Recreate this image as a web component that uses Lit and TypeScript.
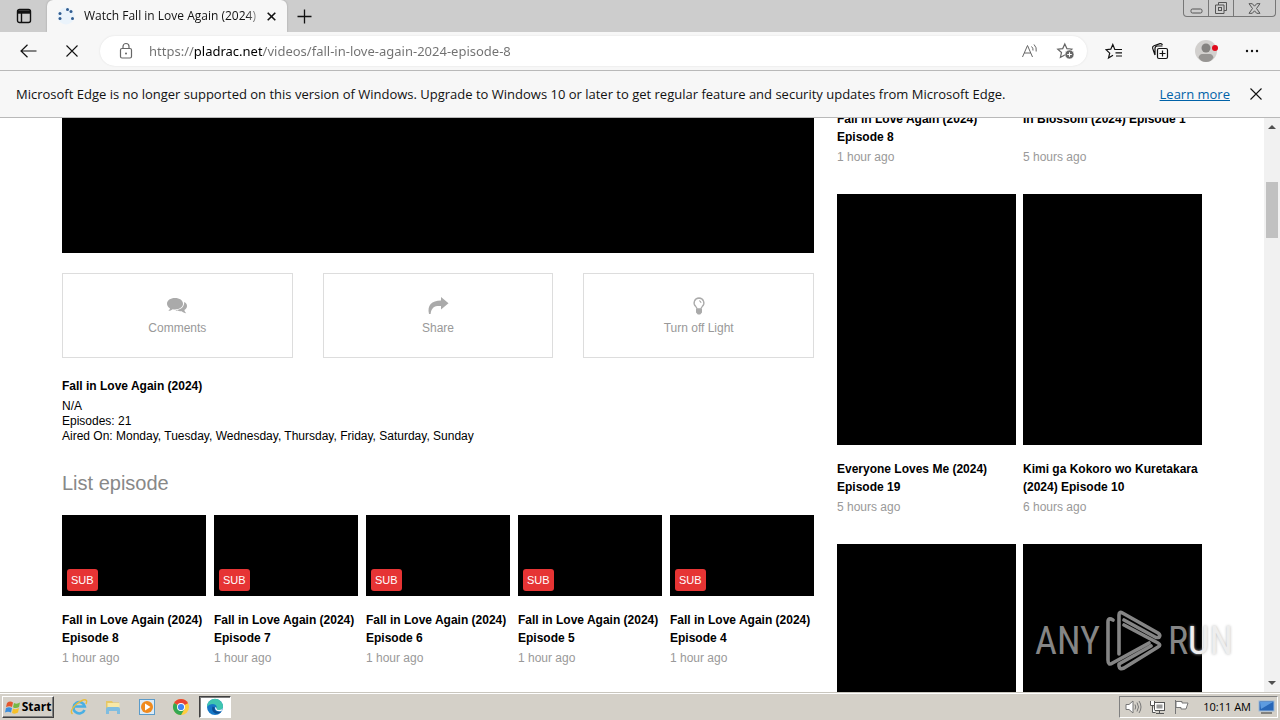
import { LitElement, html, css, svg } from "lit";
import { customElement, property } from "lit/decorators.js";

interface Video {
  title: string;
  age: string;
}

const episodes: Video[] = [8, 7, 6, 5, 4].map((n) => ({
  title: `Fall in Love Again (2024) Episode ${n}`,
  age: "1 hour ago",
}));

const latest: Video[] = [
  { title: "Everyone Loves Me (2024) Episode 19", age: "5 hours ago" },
  { title: "Kimi ga Kokoro wo Kuretakara (2024) Episode 10", age: "6 hours ago" },
];

const starPath = "M8 1.8 L9.9 6 L14.4 6.5 L11 9.6 L12 14 L8 11.7 L4 14 L5 9.6 L1.6 6.5 L6.1 6 Z";

@customElement("browser-chrome")
export class BrowserChrome extends LitElement {
  static styles = css`
    :host { display: block; font-family: "Open Sans", "Noto Sans", sans-serif; color: #111; }
    button { border: 0; padding: 0; margin: 0; background: none; display: grid; place-items: center; color: inherit; font: inherit; }
    svg { display: block; fill: none; stroke: currentColor; }
    .strip { display: flex; align-items: stretch; height: 32px; background: #cdcdcd; }
    .tab-actions { width: 47px; }
    .tab { display: flex; align-items: center; width: 240px; box-sizing: border-box; padding: 0 7px 0 10px; background: #f7f7f7; border-radius: 6px 6px 0 0; box-shadow: 0 0 2px #999; clip-path: inset(0 -3px 0 -3px); }
    .tab-title { flex: 1; margin: 0 4px 0 9px; font-size: 12px; line-height: 20px; white-space: nowrap; overflow: hidden; mask-image: linear-gradient(90deg, #000 162px, transparent 180px); }
    .tab-close { width: 18px; height: 20px; }
    .new-tab { width: 34px; }
    .window { display: flex; align-self: flex-start; height: 16px; margin: 0 4px 0 auto; border: 1px solid #777; border-top: 0; border-radius: 0 0 4px 4px; color: #555; }
    .window button { width: 25px; box-sizing: border-box; border-right: 1px solid #777; }
    .window button:last-child { width: 41px; border: 0; }
    .toolbar { display: flex; align-items: center; height: 38px; padding: 0 5px 0 6px; background: #f7f7f7; border-bottom: 1px solid #b9b9b9; }
    .tool { width: 44px; height: 30px; }
    .address ~ .tool { width: 46px; }
    .address { flex: 1; display: flex; align-items: center; height: 30px; margin: 0 4px 0 6px; padding: 0 3px 0 17px; border-radius: 16px; background: #fff; box-shadow: 0 0 2px #ddd; color: #666; }
    .address .tool { width: 36px; }
    .url { flex: 1; min-width: 0; margin-left: 14px; padding: 0; border: 0; outline: 0; font: 13px/20px "Noto Sans", "Open Sans", sans-serif; color: transparent; background: linear-gradient(90deg, #707070 45px, #000 45px, #000 113px, #707070 113px); background-clip: text; -webkit-background-clip: text; }
    .notice { display: flex; align-items: center; height: 46px; padding: 0 11px 0 16px; background: #f7f7f7; border-bottom: 1px solid #b9b9b9; font-size: 13px; line-height: 20px; }
    .message { flex: 1; }
    .more { color: #0062a8; }
    .dismiss { width: 26px; height: 26px; margin-left: 13px; }
  `;

  render() {
    return html`
      <div class="strip">
        <button class="tab-actions" aria-label="Tab actions">
          <svg width="16" height="16" viewBox="0 0 16 16" stroke-width="1.4"><rect x="1.5" y="1.5" width="13" height="13" rx="2" /><path d="M2 4h12" stroke-width="3.4" /><path d="M5.5 5v9" /></svg>
        </button>
        <div class="tab">
          <svg width="18" height="18" viewBox="0 0 18 18"><circle cx="9" cy="9" r="8.5" fill="#eaf3fb" stroke="none" /><g fill="#315d91" stroke="none"><circle cx="3" cy="6.5" r="1.5" /><circle cx="3" cy="11.5" r="1.5" /><circle cx="10.5" cy="2.500" r="1.500" /><circle cx="14" cy="4.500" r="1.500" /><circle cx="15.500" cy="11.500" r="1.500" /></g></svg>
          <div class="tab-title">Watch Fall in Love Again (2024) Episode 8</div>
          <button class="tab-close" aria-label="Close tab"><svg width="9" height="9" viewBox="0 0 9 9" stroke-width="1.6"><path d="M.7 .7l7.6 7.6M8.3 .7L.7 8.3" /></svg></button>
        </div>
        <button class="new-tab" aria-label="New tab"><svg width="15" height="15" viewBox="0 0 15 15" stroke-width="1.3"><path d="M7.5 .5v14M.5 7.5h14" /></svg></button>
        <div class="window">
          <button aria-label="Minimize"><svg width="13" height="14" viewBox="0 0 13 14"><rect x="1" y="8" width="11" height="4" rx="1.5" /></svg></button>
          <button aria-label="Restore"><svg width="14" height="14" viewBox="0 0 14 14"><path d="M4.5 4V1.5h8v8H10M4.5 4h-3v8.500h8.500V4z" /><rect x="4.500" y="6.500" width="3" height="3" /></svg></button>
          <button aria-label="Close"><svg width="13" height="11" viewBox="0 0 13 11"><path d="M1 .7h3.300L6.500 3.200 8.700 .7H12L8.500 5.500 12 10.300H8.700L6.500 7.800 4.300 10.300H1L4.500 5.500z" /></svg></button>
        </div>
      </div>
      <div class="toolbar">
        <button class="tool" aria-label="Back"><svg width="17" height="14" viewBox="0 0 17 14" stroke-width="1.2"><path d="M16.500 7H1M7.500 .7L1 7l6.500 6.300" /></svg></button>
        <button class="tool" aria-label="Stop"><svg width="12" height="12" viewBox="0 0 12 12" stroke-width="1.1"><path d="M.5 .5l11 11M11.500 .5l-11 11" /></svg></button>
        <div class="address">
          <svg width="18" height="18" viewBox="0 0 18 18" stroke-width="1.2"><rect x="3.500" y="6.500" width="11" height="9.500" rx="1.500" /><path d="M6 6.500V4.500a3 3 0 0 1 6 0v2" /><circle cx="9" cy="11.500" r="1" fill="currentColor" stroke="none" /></svg>
          <input class="url" aria-label="Address" value="https://pladrac.net/videos/fall-in-love-again-2024-episode-8" />
          <button class="tool" aria-label="Read aloud"><svg width="18" height="16" viewBox="0 0 18 16"><path d="M1.500 14L6.500 2.500 11.500 14M3.200 10h6.600M10.500 3.500q1.800 1.500 1.500 4M13 1.500q3 3 2.200 7" /></svg></button>
          <button class="tool" aria-label="Add to favorites"><svg width="20" height="18" viewBox="0 0 20 18" stroke-width="1.1"><path d=${starPath} transform="scale(1.1)" /><circle cx="13.500" cy="12.500" r="4.500" fill="#666" stroke="#fff" stroke-width="0.600" /><path d="M13.500 10.200v4.600M11.200 12.500h4.600" stroke="#fff" /></svg></button>
        </div>
        <button class="tool" aria-label="Favorites"><svg width="18" height="17" viewBox="0 0 18 17" stroke-width="1.200"><path d="M11 6.500H9.800L7.800 1.500 5.800 6.200 1 6.700l3.700 3.400L3.500 15 8 12.300M10.500 6.500H17M10.500 9.800H17M11 13H17" /></svg></button>
        <button class="tool" aria-label="Collections"><svg width="18" height="18" viewBox="0 0 18 18" stroke-width="1.200"><rect x="6.500" y="6.500" width="10" height="10" rx="1.500" /><path d="M11.500 8.500v6M8.500 11.500h6M4 13L1.600 6.200Q1.200 4.300 3 3.700L9 1.700q1.800-.4 2.400 1.300M4 13V6.500Q4 4 6.500 4H11.500" /></svg></button>
        <button class="tool" aria-label="Profile"><svg width="24" height="24" viewBox="0 0 24 24"><g stroke="none"><circle cx="12" cy="12" r="11" fill="#d2d0ce" /><circle cx="12" cy="9" r="4.500" fill="#858381" /><path d="M4.500 18.500Q5.500 15 8 15h8q2.500 0 3.500 3.500Q17 23 12 23t-7.500-4.500z" fill="#979593" /><circle cx="21" cy="9" r="3" fill="#e00b1c" /></g></svg></button>
        <button class="tool" aria-label="Settings"><svg width="14" height="4" viewBox="0 0 14 4"><g fill="#111" stroke="none"><circle cx="2" cy="2" r="1.200" /><circle cx="7" cy="2" r="1.200" /><circle cx="12" cy="2" r="1.200" /></g></svg></button>
      </div>
      <div class="notice">
        <span class="message">Microsoft Edge is no longer supported on this version of Windows. Upgrade to Windows 10 or later to get regular feature and security updates from Microsoft Edge.</span>
        <a class="more" href="#">Learn more</a>
        <button class="dismiss" aria-label="Dismiss"><svg width="12" height="12" viewBox="0 0 12 12" stroke-width="1.100"><path d="M.5 .5l11 11M11.500 .5l-11 11" /></svg></button>
      </div>
    `;
  }
}

@customElement("video-card")
export class VideoCard extends LitElement {
  @property() heading = "";
  @property() age = "";
  @property({ type: Boolean }) poster = false;
  @property({ type: Boolean }) textOnly = false;

  static styles = css`
    :host { display: block; min-width: 0; }
    .frame { display: block; position: relative; aspect-ratio: 16 / 9; margin-bottom: 15px; background: #000; }
    .frame.tall { aspect-ratio: 179 / 251; }
    .badge { position: absolute; left: 5px; bottom: 5px; padding: 0 4px; border-radius: 3px; background: #e63434; color: #fff; font-size: 11px; line-height: 22px; }
    .title { display: block; min-height: 36px; color: #000; font-size: 12px; font-weight: 700; line-height: 18px; text-decoration: none; }
    .age { margin-top: 3px; color: #999; font-size: 12px; line-height: 16px; }
  `;

  render() {
    return html`
      ${this.textOnly ? "" : html`<a class="frame ${this.poster ? "tall" : ""}" href="#" aria-label=${this.heading || "Video"}>${this.poster ? "" : html`<span class="badge">SUB</span>`}</a>`}
      ${this.heading ? html`<a class="title" href="#">${this.heading}</a><div class="age">${this.age}</div>` : ""}
    `;
  }
}

@customElement("video-page")
export class VideoPage extends LitElement {
  static styles = css`
    :host { display: flex; min-height: 0; overflow: hidden; position: relative; background: #fff; color: #000; font-family: "Liberation Sans", Arial, sans-serif; font-size: 12px; }
    .scroll { flex: 1; min-width: 0; overflow: hidden; }
    .container { display: grid; grid-template-columns: 752fr 365fr; gap: 23px; max-width: 1140px; margin: 0 auto; }
    .player { height: 135px; background: #000; }
    .actions { display: grid; grid-template-columns: repeat(3, 1fr); gap: 30px; margin-top: 20px; }
    .action { height: 85px; display: flex; flex-direction: column; align-items: center; justify-content: center; gap: 4px; padding: 2px 0 0; border: 1px solid #ddd; background: #fff; color: #999; font: 12px/18px "Liberation Sans", Arial, sans-serif; }
    .action svg { display: block; fill: #aaa; }
    .name { margin: 19px 0 0; font-size: 12px; line-height: 18px; }
    .facts { margin-top: 4px; line-height: 15px; }
    .section { margin: 26px 0 19px; color: #888; font-size: 20px; font-weight: 400; line-height: 26px; }
    .episodes { display: grid; grid-template-columns: repeat(5, 1fr); gap: 8px; }
    .latest { display: grid; grid-template-columns: 1fr 1fr; gap: 29px 7px; align-content: start; margin-top: -8px; }
    .bar { display: flex; flex-direction: column; align-items: center; width: 16px; background: #f1f1f1; }
    .bar svg { fill: #505050; flex: none; }
    .track { flex: 1; align-self: stretch; padding: 47px 2px 0; }
    .thumb { height: 56px; background: #c1c1c1; }
    .mark { position: absolute; right: 47px; bottom: 18px; display: flex; align-items: center; gap: 6px; color: #858585; font: 400 38px/66px "Roboto Condensed", "Liberation Sans Narrow", "Open Sans Condensed", "Liberation Sans", sans-serif; }
    .mark svg { fill: none; stroke: currentColor; }
    .pale { color: #eee; text-shadow: 0 0 3px #bbb; }
  `;

  render() {
    return html`
      <div class="scroll">
        <div class="container">
          <main>
            <div class="player"></div>
            <div class="actions">
              <button class="action"><svg width="22" height="18" viewBox="0 0 22 18"><path d="M9 1c4.600 0 8 2.400 8 5.700s-3.400 5.700-8 5.700c-.8 0-1.600-.1-2.300-.2C5.500 13.200 4 13.800 2.300 14c.9-.9 1.500-1.800 1.700-2.800C2.100 10.200 1 8.600 1 6.700 1 3.400 4.400 1 9 1z" /><path d="M18.200 5c2 1 2.800 2.400 2.800 4 0 1.700-1 3-2.600 3.900.2 1.300.8 2.300 1.900 3.300-2-.2-3.500-.9-4.600-2-2.500.3-4.800-.1-6.400-1.100C14.500 13 18.500 10 18.200 5z" /></svg>Comments</button>
              <button class="action"><svg width="22" height="18" viewBox="0 0 22 18"><path d="M14 0l7.500 6.300L14 12.500V9C8.500 8.600 4.500 9.500 3.600 17H2C0 8.500 4.500 3.500 14 3.500z" /></svg>Share</button>
              <button class="action"><svg width="14" height="18" viewBox="0 0 14 18"><path d="M7 1a4.900 4.900 0 0 0-3.200 8.600Q4.800 10.700 5 12h4q.2-1.300 1.200-2.400A4.900 4.900 0 0 0 7 1z" fill="none" stroke="#aaa" stroke-width="1.300" /><path d="M4 12h6v3.500L8.200 17.500H5.800L4 15.500zM7 3.200Q9.500 3.500 9.500 6H8.500Q8.500 4.300 7 4.200z" /></svg>Turn off Light</button>
            </div>
            <h1 class="name">Fall in Love Again (2024)</h1>
            <div class="facts">
              <div>N/A</div>
              <div>Episodes: 21</div>
              <div>Aired On: Monday, Tuesday, Wednesday, Thursday, Friday, Saturday, Sunday</div>
            </div>
            <h2 class="section">List episode</h2>
            <div class="episodes">
              ${episodes.map((v) => html`<video-card heading=${v.title} age=${v.age}></video-card>`)}
            </div>
          </main>
          <aside class="latest">
            <video-card textOnly heading="Fall in Love Again (2024) Episode 8" age="1 hour ago"></video-card>
            <video-card textOnly heading="In Blossom (2024) Episode 1" age="5 hours ago"></video-card>
            ${latest.map((v) => html`<video-card poster heading=${v.title} age=${v.age}></video-card>`)}
            <video-card poster></video-card>
            <video-card poster></video-card>
          </aside>
        </div>
      </div>
      <div class="bar">
        <svg width="16" height="17" viewBox="0 0 16 17"><path d="M4 11l4-4 4 4z" /></svg>
        <div class="track"><div class="thumb"></div></div>
        <svg width="16" height="17" viewBox="0 0 16 17"><path d="M4 6l4 4 4-4z" /></svg>
      </div>
      <div class="mark">
        <span>ANY</span>
        <svg width="56" height="62" viewBox="0 0 56 62" stroke-width="3.600" stroke-linejoin="round" stroke-linecap="round"><path d="M13 44V5q0-4 3.500-2L52 23q3 2 1 4.500h-3L18 10M7 10Q2 7 2 12V50q0 6 4.500 3L43 33M18 15L52 33q3.500 2 0 4L18 58q-4.500 2-5-2v-2L45 36" /></svg>
        <span>R<span class="pale">UN</span></span>
      </div>
    `;
  }
}

@customElement("task-bar")
export class TaskBar extends LitElement {
  static styles = css`
    :host { display: flex; align-items: center; box-sizing: border-box; height: 28px; padding: 1px 2px 0; border-top: 1px solid #c9c6be; box-shadow: inset 0 1px #fff; background: #d4d0c8; color: #000; }
    button { display: flex; align-items: center; justify-content: center; height: 22px; padding: 0; border: 1px solid transparent; background: none; }
    svg { display: block; }
    .start { width: 52px; gap: 1px; border-color: #fff #404040 #404040 #fff; box-shadow: inset -1px -1px #808080; font: 700 12px/16px "Open Sans", "Noto Sans", sans-serif; color: #000; }
    .quick { display: flex; gap: 2px; margin-left: 9px; }
    .quick button { width: 32px; }
    .quick .active { border-color: #404040 #fff #fff #404040; background: #fff; box-shadow: inset 1px 1px #808080; }
    .tray { display: flex; align-items: center; gap: 7px; box-sizing: border-box; height: 22px; margin-left: auto; padding: 0 2px 0 5px; border: 1px solid; border-color: #808080 #fff #fff #808080; font: 11px/16px "Open Sans", "Noto Sans", sans-serif; }
    .time { margin-left: 6px; }
  `;

  render() {
    const flag = svg`<path d="M2 4Q5 1.500 8 3.500L7 8Q4.500 6.500 1 8z" fill="#e4572e"/><path d="M9 4Q12 5.500 15 3.500L14 8Q11 10 8 8.200z" fill="#76b843"/><path d="M1 9Q4 7.500 7 9L6 13.500Q3 12 0 13.500z" fill="#3b8ede"/><path d="M8 9.500Q11 11 14 9L13 13.500Q10 15.500 7 14z" fill="#f6c029"/>`;
    return html`
      <button class="start"><svg width="16" height="16" viewBox="0 0 16 16">${flag}</svg>Start</button>
      <div class="quick">
        <button aria-label="Internet Explorer"><svg width="18" height="18" viewBox="0 0 18 18" fill="none"><path d="M14.500 12a5.700 5.700 0 1 1 .3-3.500H5" stroke="#49afe3" stroke-width="2.600" /><path d="M2.500 16Q-1 13 6 6.500 14 0 16.500 2.500 17 3.500 16 6" stroke="#e9bd3a" stroke-width="1.400" /></svg></button>
        <button aria-label="Explorer"><svg width="18" height="18" viewBox="0 0 18 18"><path d="M2 3h6l1 1.500h6V12H2z" fill="#e6c765" /><path d="M3.500 5h12v7h-12z" fill="#f8e8a6" /><path d="M2 11q0-2 2-2h10q2 0 2 2v5h-3v-3H5v3H2z" fill="#7fbde0" /></svg></button>
        <button aria-label="Media Player"><svg width="18" height="18" viewBox="0 0 18 18"><rect x="1.500" y="1.500" width="15" height="15" fill="#dcebf7" stroke="#5b9bc9" /><circle cx="9" cy="9" r="6" fill="#f08a1d" /><path d="M7 5.500L12.500 9 7 12.500z" fill="#fff" /></svg></button>
        <button aria-label="Chrome"><svg width="18" height="18" viewBox="0 0 18 18"><circle cx="9" cy="9" r="8" fill="#ffcd40" /><path d="M9 9L2.070 5A8 8 0 0 1 15.930 5z" fill="#ea4335" /><path d="M2.070 5A8 8 0 0 0 9 17l3.500-6z" fill="#34a853" /><path d="M9 5h6.930L12 7z" fill="#ea4335" /><circle cx="9" cy="9" r="4" fill="#fff" /><circle cx="9" cy="9" r="3.100" fill="#4285f4" /></svg></button>
        <button class="active" aria-label="Edge"><svg width="18" height="18" viewBox="0 0 18 18"><circle cx="9" cy="9" r="8" fill="#1678c8" /><path d="M1 9A8 8 0 0 1 17 8.500Q17 12 13 12q-3 0-2.500-1.500Q11.500 6.500 7 6 3 6 1 9z" fill="#3fc6b0" /><path d="M6.500 8.500Q5 13.500 9.500 15.500 13 16.500 15.500 13.500 8.500 15 8.500 9.500z" fill="#0d4d91" /><path d="M10.500 10.500Q10.500 12 13 12q3 0 4-2l-1.500 3Q9 14 9 9.500 10 8.500 10.500 10.500z" fill="#fff" /></svg></button>
      </div>
      <div class="tray">
        <svg width="17" height="16" viewBox="0 0 17 16" stroke="#777" fill="#fff"><path d="M1 5.500h3L8 2v12L4 10.500H1z" /><path d="M10 5.500q1.500 2.500 0 5M12 3.500q3 4.500 0 9M14 2q4 6 0 12" fill="none" /></svg>
        <svg width="17" height="16" viewBox="0 0 17 16" stroke="#555" fill="#fff"><rect x="5.500" y="3.500" width="10" height="8" /><rect x="7.500" y="5.500" width="6" height="4" fill="#999" stroke="none" /><path d="M7 14.500h8M10.500 12v2M1.500 2v4.500h4V2M3.500 6.500v7h3" /></svg>
        <svg width="17" height="16" viewBox="0 0 17 16" stroke="#777" fill="#fff"><path d="M2.500 1v14" /><path d="M3 2.500h6v1.500h6l-2 6H8V8.500H3z" /></svg>
        <span class="time">10:11 AM</span>
        <svg width="17" height="14" viewBox="0 0 17 14"><rect x="1" y="1" width="15" height="10" fill="#2867b8" stroke="#9cb9d8" /><path d="M2 2h13L3 9z" fill="#5d9be0" /><path d="M3 13h11" stroke="#333" /></svg>
      </div>
    `;
  }
}

@customElement("app-root")
export class AppRoot extends LitElement {
  static styles = css`
    :host { display: grid; grid-template-rows: auto 1fr auto; height: 100vh; overflow: hidden; }
  `;

  render() {
    return html`<browser-chrome></browser-chrome><video-page></video-page><task-bar></task-bar>`;
  }
}
